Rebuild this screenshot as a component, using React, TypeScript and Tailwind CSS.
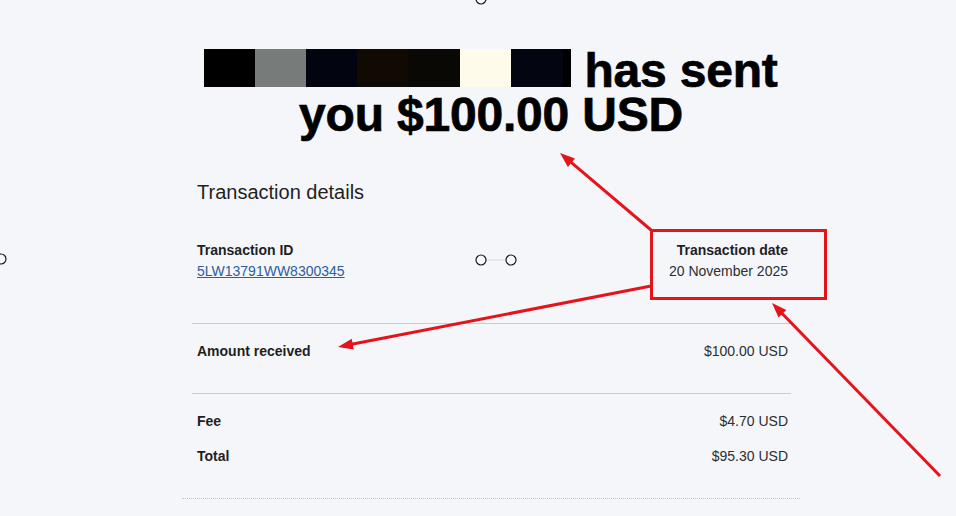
import React from 'react';

const nameBlocks = [
  'bg-[#000000] w-[51px]',
  'bg-[#777b7a] w-[51px]',
  'bg-[#020510] w-[51px]',
  'bg-[#110a02] w-[51px]',
  'bg-[#0a0805] w-[52px]',
  'bg-[#fffbeb] w-[51px]',
  'bg-[#030611] w-[52px]',
  'bg-[#000000] w-[8px]',
];

function arrowHead(x1: number, y1: number, x2: number, y2: number) {
  const dx = x2 - x1;
  const dy = y2 - y1;
  const len = Math.hypot(dx, dy);
  const ux = dx / len;
  const uy = dy / len;
  const bx = x2 - ux * 15;
  const by = y2 - uy * 15;
  const px = -uy * 5.5;
  const py = ux * 5.5;
  return `${x2},${y2} ${bx + px},${by + py} ${bx - px},${by - py}`;
}

function Arrow({ from, to }: { from: [number, number]; to: [number, number] }) {
  const [x1, y1] = from;
  const [x2, y2] = to;
  const len = Math.hypot(x2 - x1, y2 - y1);
  const ex = x2 - ((x2 - x1) / len) * 10;
  const ey = y2 - ((y2 - y1) / len) * 10;
  return (
    <g>
      <line x1={x1} y1={y1} x2={ex} y2={ey} stroke="#e5141b" strokeWidth={3} />
      <polygon points={arrowHead(x1, y1, x2, y2)} fill="#e5141b" />
    </g>
  );
}

function Row({ label, value }: { label: string; value: string }) {
  return (
    <div className="flex justify-between pl-[5px] pr-[3px] text-[14px] leading-[21px]">
      <span className="font-bold text-[#1f1f1f]">{label}</span>
      <span className="text-[#2c2e2f]">{value}</span>
    </div>
  );
}

export default function App() {
  return (
    <div className="relative w-[956px] h-[516px] overflow-hidden bg-[#f5f6fa] font-['Liberation_Sans',Arial,sans-serif]">
      <div className="ml-[182px] w-[618px] pt-[49px]">
        {/* Heading */}
        <h1 className="text-center text-[48px] leading-[44px] font-bold text-black tracking-[-0.2px] [-webkit-text-stroke:0.7px_black]">
          <span className="inline-flex align-baseline h-[38px]">
            {nameBlocks.map((c, i) => (
              <span key={i} className={`h-[38px] ${c}`} />
            ))}
          </span>{' '}
          has sent
          <br />
          you $100.00 USD
        </h1>

        {/* Details */}
        <div className="ml-[10px] w-[599px]">
          <h2 className="mt-[41px] pl-[5px] text-[20px] leading-[28px] text-[#1f1f1f]">
            Transaction details
          </h2>

          <div className="mt-[34px] flex justify-between pl-[5px] pr-[3px] text-[14px] leading-[21px]">
            <div>
              <p className="font-bold text-[#1f1f1f]">Transaction ID</p>
              <a className="text-[#2c5d9e] underline">5LW13791WW8300345</a>
            </div>
            <div className="text-right">
              <p className="font-bold text-[#1f1f1f]">Transaction date</p>
              <p className="text-[#2c2e2f]">20 November 2025</p>
            </div>
          </div>

          <div className="mt-[41px] border-t border-[#c9cbcf]" />
          <div className="mt-[17px]">
            <Row label="Amount received" value="$100.00 USD" />
          </div>

          <div className="mt-[31px] border-t border-[#c9cbcf]" />
          <div className="mt-[17px] flex flex-col gap-[14px]">
            <Row label="Fee" value="$4.70 USD" />
            <Row label="Total" value="$95.30 USD" />
          </div>
        </div>
        <div className="mt-[31px] border-t border-dotted border-[#c4c6cb]" />
      </div>

      {/* Annotations */}
      <svg className="absolute inset-0 pointer-events-none" width={956} height={516}>
        <rect x={651.5} y={230.5} width={174} height={68} fill="none" stroke="#e5141b" strokeWidth={3} />
        <Arrow from={[651, 230]} to={[560, 153]} />
        <Arrow from={[651, 286]} to={[338, 347]} />
        <Arrow from={[940, 476]} to={[772, 303]} />

        <line x1={486} y1={260} x2={506} y2={260} stroke="#dcdde0" strokeWidth={1} />
        <circle cx={481} cy={260} r={5} fill="#f7f8fb" stroke="#1a1a1a" strokeWidth={1.2} />
        <circle cx={511} cy={260} r={5} fill="#f7f8fb" stroke="#1a1a1a" strokeWidth={1.2} />
        <circle cx={481} cy={-1} r={5} fill="#f7f8fb" stroke="#1a1a1a" strokeWidth={1.2} />
        <circle cx={1} cy={259} r={5} fill="#f7f8fb" stroke="#1a1a1a" strokeWidth={1.2} />
      </svg>
    </div>
  );
}
